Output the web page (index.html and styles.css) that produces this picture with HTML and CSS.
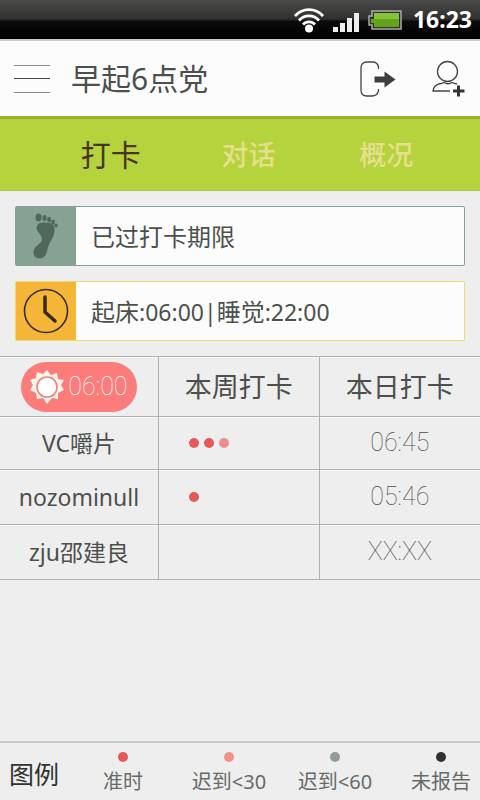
FILE: index.html
```html
<!DOCTYPE html>
<html lang="zh-CN">
<head>
<meta charset="utf-8">
<meta name="viewport" content="width=device-width, initial-scale=1">
<title>早起6点党</title>
<link rel="stylesheet" href="styles.css">
</head>
<body>
<div class="status">
  <svg width="30" height="26" viewBox="0 0 30 26" fill="none" stroke="#fff" stroke-width="2.800">
    <path d="M1 9A18.500 18.500 0 0 1 29 9M5 13.500A13 13 0 0 1 25 13.500M9 17.500A8 8 0 0 1 21 17.500"/>
    <circle cx="15" cy="21.500" r="4" fill="#fff" stroke="none"/>
  </svg>
  <svg class="signal" width="27" height="20" viewBox="0 0 27 20" fill="#eee">
    <path d="M0 15h5v5H0zM7 11h5v9H7zM14 6h5v14h-5zM21 1h5v19h-5z"/>
  </svg>
  <svg class="battery" width="34" height="20" viewBox="0 0 34 20">
    <path d="M4 1h29v18H4v-4H1V6h3z" fill="#30352c" stroke="#aaa" stroke-width="1.500"/>
    <path d="M6 3h25v14H6v-4H3V9h3z" fill="#62a51d"/>
    <path d="M6 3h25v6H6z" fill="#83c536"/>
  </svg>
  <time class="clock">16:23</time>
</div>
<header class="bar">
  <button class="icon-button" type="button" aria-label="菜单">
    <svg width="36" height="30" viewBox="0 0 36 30" stroke-width="1">
      <path d="M0 1.500h36M0 28.500h36" stroke="#858b85"/><path d="M0 14.500h36" stroke="#444"/>
    </svg>
  </button>
  <h1>早起6点党</h1>
  <button class="icon-button" type="button" aria-label="退出">
    <svg width="36" height="36" viewBox="0 0 36 36" fill="none" stroke="#444" stroke-width="1.300">
      <path d="M18.500 8V6q-1-5-6-5H7Q1 1 1 7v22q0 6 6 6h5q5 0 6.500-5v-2"/>
      <path d="M14.500 15.500h10V10.500l11 8-11 8v-5h-10z" fill="#3c3f3c" stroke="none"/>
    </svg>
  </button>
  <button class="icon-button add" type="button" aria-label="添加好友">
    <svg width="34" height="38" viewBox="0 0 34 38" fill="none" stroke="#444" stroke-width="1.300">
      <circle cx="15.500" cy="11.500" r="10"/>
      <path d="M18 31H1q1-6 6-7 3-.500 5-1.500 4 2.500 8 0 2 1 5 1.500"/>
      <path d="M26.500 25.500v11M21 31h11.500" stroke="#333" stroke-width="3"/>
    </svg>
  </button>
</header>
<nav class="tabs">
  <a class="active" href="#checkin">打卡</a>
  <a href="#chat">对话</a>
  <a href="#overview">概况</a>
</nav>
<main id="checkin">
  <section class="notice late">
    <span class="notice-icon">
      <svg width="26" height="46" viewBox="0 0 26 46" fill="#50685c">
        <path d="M3.500 15Q4 9 11 9.500L17 10q5 1 4.500 8-.500 5-3 9-3 4-4 9-1 9-7.500 9.500Q0 45 .500 39 1 34 6 31q3-2 3-5 0-3-3-6-2-2-2.500-5z"/>
        <ellipse cx="5.500" cy="4.500" rx="3" ry="4"/><ellipse cx="11.500" cy="5" rx="2.100" ry="3"/><ellipse cx="16" cy="6.500" rx="2" ry="2.700"/><ellipse cx="20" cy="9" rx="1.800" ry="2.400"/><ellipse cx="23" cy="12.500" rx="1.700" ry="2.100"/>
      </svg>
    </span>
    <p>已过打卡期限</p>
  </section>
  <section class="notice schedule">
    <span class="notice-icon">
      <svg width="46" height="46" viewBox="0 0 46 46" fill="none" stroke="#332c20">
        <circle cx="23" cy="23" r="21.500" stroke-width="1.600"/>
        <path d="M22 9v15l10 9" stroke-width="3.500" stroke-linecap="round"/>
      </svg>
    </span>
    <p>起床<span class="hours">:06:00|</span>睡觉<span class="hours">:22:00</span></p>
  </section>
  <table>
    <colgroup><col class="who"><col><col class="today"></colgroup>
    <thead>
      <tr>
        <th scope="col"><span class="pill">
          <svg width="34" height="34" viewBox="-17 -17 34 34">
            <path fill="#fff5e8" d="M0-17l4 5 6-2 1 6 6 1-3 5 3 5-6 3v6l-6-1-5 6-4-6-6 1-1-6-6-3 3-5-3-5 6-2 1-6 6 2z"/>
            <circle r="10" fill="#fff" stroke="#ee827f" stroke-width="1.600"/>
          </svg>
          <time class="thin">06:00</time></span></th>
        <th scope="col">本周打卡</th>
        <th scope="col">本日打卡</th>
      </tr>
    </thead>
    <tbody>
      <tr><td>VC嚼片</td><td><span class="dots"><i class="dot red"></i><i class="dot red"></i><i class="dot pink"></i></span></td><td class="thin">06:45</td></tr>
      <tr><td>nozominull</td><td><span class="dots"><i class="dot red"></i></span></td><td class="thin">05:46</td></tr>
      <tr><td>zju邵建良</td><td></td><td class="thin">XX:XX</td></tr>
    </tbody>
  </table>
</main>
<footer>
  <h2>图例</h2>
  <ul>
    <li><i class="dot red"></i>准时</li>
    <li><i class="dot salmon"></i>迟到&lt;30</li>
    <li><i class="dot gray"></i>迟到&lt;60</li>
    <li><i class="dot black"></i>未报告</li>
  </ul>
</footer>
</body>
</html>
```

FILE: styles.css
```css
* { box-sizing: border-box; }
body {
  margin: 0;
  min-height: 100vh;
  display: flex;
  flex-direction: column;
  background: #eee;
  color: #4c504d;
  font-family: "Noto Sans", "Noto Sans CJK SC", sans-serif;
}
h1, h2, p, ul { margin: 0; padding: 0; font-weight: 400; }
svg { display: block; }

.status {
  height: 39px;
  padding-right: 8px;
  display: flex;
  align-items: center;
  justify-content: flex-end;
  background: linear-gradient(#4b4c4a, #30312f 48%, #0b0b0b 55%, #000);
}
.signal { margin: 4px 8px 0 9px; }
.battery { margin-right: 11px; }
.clock { color: #fff; font: 700 23px/39px "Noto Sans", sans-serif; }

.bar {
  height: 80px;
  padding: 0 14px;
  display: flex;
  align-items: center;
  border-top: 2px solid #ccc;
  border-bottom: 3px solid #9aae2c;
  background: #fcfcfc;
}
.bar h1 { flex: 1; margin-left: 21px; font-size: 30px; line-height: 40px; }
.icon-button { padding: 0; border: 0; background: none; }
.add { margin-left: 36px; }

.tabs {
  height: 72px;
  padding: 0 25px 0 42px;
  display: flex;
  align-items: center;
  background: #b4d33c;
  border-bottom: 1px solid #a9c65a;
}
.tabs a {
  flex: 1;
  color: #e8df8e;
  font-size: 27px;
  font-weight: 500;
  line-height: 40px;
  text-align: center;
  text-decoration: none;
}
.tabs .active { color: #4a3420; font-size: 30px; font-weight: 400; }

main { flex: 1; }
.notice {
  height: 60px;
  margin: 15px;
  display: flex;
  border: 1px solid;
  border-radius: 2px;
  background: #fcfcfc;
}
.notice-icon { width: 60px; display: flex; align-items: center; justify-content: center; }
.notice p { padding-left: 15px; color: #4c504d; font-size: 24px; line-height: 60px; }
.hours { font-size: 23px; }
.late { border-color: #86a292; }
.late .notice-icon { background: #86a292; }
.schedule { border-color: #f0d878; }
.schedule .notice-icon { background: #f5b536; }

table { width: 100%; border-collapse: collapse; table-layout: fixed; }
.who { width: 33%; }
.today { width: 33.5%; }
tr { height: 55px; border: solid #b0b0b0; border-width: 1px 0; }
thead tr { height: 60px; }
tbody tr:first-child { height: 53px; }
th, td { padding: 0; text-align: center; box-shadow: inset 0 1px #fafafa; }
th + th, td + td { border-left: 1px solid #b0b0b0; }
th { font-size: 27px; font-weight: 400; line-height: 40px; }
td { font-size: 23px; line-height: 32px; }
.pill {
  width: 116px;
  height: 50px;
  display: inline-flex;
  align-items: center;
  justify-content: center;
  gap: 4px;
  vertical-align: middle;
  border-radius: 25px;
  background: #fc7b7b;
  color: #fff;
}
.thin { font-family: Roboto, sans-serif; font-weight: 100; font-size: 25px; font-feature-settings: "zero"; }
.dots { display: flex; gap: 5px; padding-left: 30px; }
.dot { width: 10px; height: 10px; flex: none; border-radius: 50%; }
.red { background: #e45a5a; }
.pink { background: #ec8e8e; }
.salmon { background: #f0908a; }
.gray { background: #939c96; }
.black { background: #303030; }

footer { height: 59px; display: flex; border-top: 2px solid #c6cac8; }
footer h2 { width: 70px; padding-left: 9px; color: #303330; font-size: 25px; line-height: 62px; }
footer ul { flex: 1; display: grid; grid-template-columns: 106fr 106fr 106fr 92fr; list-style: none; }
footer li {
  display: flex;
  flex-direction: column;
  align-items: center;
  gap: 5px;
  padding-top: 9px;
  color: #666b68;
  font-size: 20px;
  line-height: 30px;
  white-space: nowrap;
}
footer li:last-child { padding-left: 14px; }
```
